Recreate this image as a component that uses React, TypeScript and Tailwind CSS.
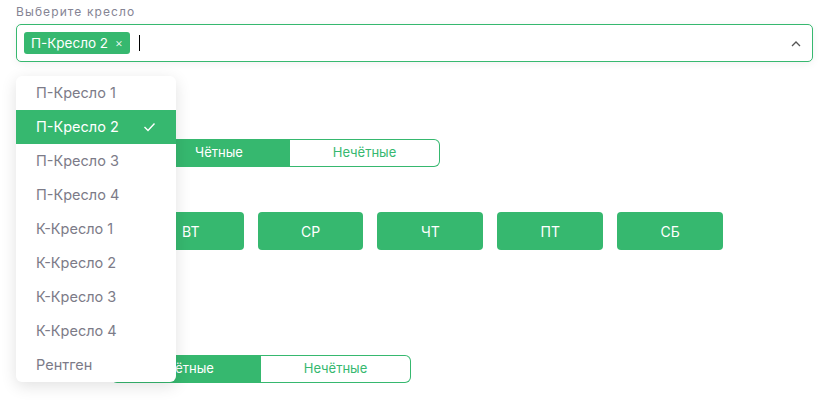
import React from "react";

const items = [
  "П-Кресло 1",
  "П-Кресло 2",
  "П-Кресло 3",
  "П-Кресло 4",
  "К-Кресло 1",
  "К-Кресло 2",
  "К-Кресло 3",
  "К-Кресло 4",
  "Рентген",
];

const days = ["ПН", "ВТ", "СР", "ЧТ", "ПТ", "СБ"];

function Toggle({ offset }: { offset: string }) {
  return (
    <div className={`flex h-[28px] ${offset}`}>
      <div className="flex w-[150px] items-center justify-center rounded-l-[6px] bg-[#36b86f] pl-[8px] text-[13px] text-white">
        Чётные
      </div>
      <div className="flex w-[150px] items-center justify-center rounded-r-[6px] border border-l-0 border-[#36b86f] bg-white text-[13px] text-[#36b86f]">
        Нечётные
      </div>
    </div>
  );
}

export default function App() {
  return (
    <div
      className="relative h-[400px] w-[827px] overflow-hidden bg-white pl-4 pr-[14px] pt-[5px]"
      style={{ fontFamily: "Inter, 'Noto Sans', sans-serif" }}
    >
      <div className="text-[12px] leading-[14px] tracking-[1.1px] text-[#858494]">Выберите кресло</div>
      <div className="mt-[5px] flex h-[38px] items-center rounded-[5px] border border-[#36b86f] bg-white pl-[7px] pr-[10px] shadow-[0_2px_8px_rgba(0,0,0,0.06)]">
        <div className="flex h-[22px] shrink-0 items-center gap-[7px] whitespace-nowrap rounded-[3px] bg-[#36b86f] pl-[7px] pr-[7px] text-[13.5px] text-white">
          <span>П-Кресло 2</span>
          <span className="text-[12px] font-light">×</span>
        </div>
        <div className="ml-[9px] h-[16px] w-[1.5px] bg-black" />
        <div className="flex-1" />
        <svg width="12" height="8" viewBox="0 0 12 8" className="mt-[1px]">
          <path d="M2 6 L6 2 L10 6" fill="none" stroke="#555" strokeWidth="1.3" />
        </svg>
      </div>

      <Toggle offset="mt-[77px] ml-[124px] w-[300px]" />

      <div className="mt-[45px] ml-[2px] flex w-[705px] gap-[14px]">
        {days.map((d) => (
          <div
            key={d}
            className="flex h-[38px] flex-1 items-center justify-center rounded-[4px] bg-[#36b86f] text-[14px] text-white"
          >
            {d}
          </div>
        ))}
      </div>

      <Toggle offset="mt-[105px] ml-[95px] w-[300px]" />

      <div className="absolute left-4 top-[76px] w-[160px] overflow-hidden rounded-[6px] bg-white shadow-[0_4px_16px_rgba(0,0,0,0.12)]">
        {items.map((it) => {
          const sel = it === "П-Кресло 2";
          return (
            <div
              key={it}
              className={`flex h-[34px] items-center justify-between pl-[20px] pr-[20px] text-[14.5px] ${
                sel ? "bg-[#36b86f] text-white" : "text-[#7c7b88]"
              }`}
            >
              <span>{it}</span>
              {sel && (
                <svg width="13" height="10" viewBox="0 0 13 10">
                  <path d="M1.5 5 L5 8.5 L11.5 1.5" fill="none" stroke="white" strokeWidth="1.4" />
                </svg>
              )}
            </div>
          );
        })}
      </div>
    </div>
  );
}
